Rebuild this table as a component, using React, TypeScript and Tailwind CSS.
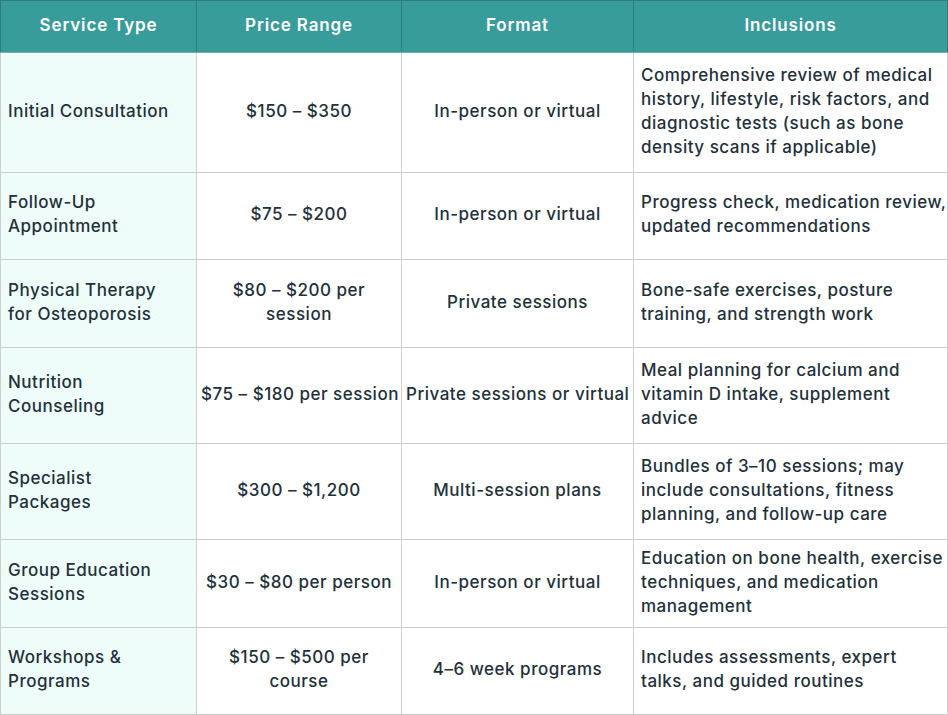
const rows = [
  {
    service: ["Initial Consultation"],
    price: ["$150 – $350"],
    format: "In-person or virtual",
    inclusions: [
      "Comprehensive review of medical",
      "history, lifestyle, risk factors, and",
      "diagnostic tests (such as bone",
      "density scans if applicable)",
    ],
    h: "h-[120px]",
  },
  {
    service: ["Follow-Up", "Appointment"],
    price: ["$75 – $200"],
    format: "In-person or virtual",
    inclusions: ["Progress check, medication review,", "updated recommendations"],
    h: "h-[87px]",
  },
  {
    service: ["Physical Therapy", "for Osteoporosis"],
    price: ["$80 – $200 per", "session"],
    format: "Private sessions",
    inclusions: ["Bone-safe exercises, posture", "training, and strength work"],
    h: "h-[88px]",
  },
  {
    service: ["Nutrition", "Counseling"],
    price: ["$75 – $180 per session"],
    format: "Private sessions or virtual",
    inclusions: ["Meal planning for calcium and", "vitamin D intake, supplement", "advice"],
    h: "h-[96px]",
  },
  {
    service: ["Specialist", "Packages"],
    price: ["$300 – $1,200"],
    format: "Multi-session plans",
    inclusions: [
      "Bundles of 3–10 sessions; may",
      "include consultations, fitness",
      "planning, and follow-up care",
    ],
    h: "h-[96px]",
  },
  {
    service: ["Group Education", "Sessions"],
    price: ["$30 – $80 per person"],
    format: "In-person or virtual",
    inclusions: ["Education on bone health, exercise", "techniques, and medication", "management"],
    h: "h-[88px]",
  },
  {
    service: ["Workshops &", "Programs"],
    price: ["$150 – $500 per", "course"],
    format: "4–6 week programs",
    inclusions: ["Includes assessments, expert", "talks, and guided routines"],
    h: "h-[87px]",
  },
];

function Lines({ lines }: { lines: string[] }) {
  return (
    <>
      {lines.map((l, i) => (
        <span key={i} className="block whitespace-nowrap">
          {l}
        </span>
      ))}
    </>
  );
}

export default function App() {
  return (
    <div className="bg-white min-h-screen" style={{ fontFamily: "Inter, 'Noto Sans', sans-serif" }}>
      <table className="table-fixed border-collapse w-[947px] text-[17px] leading-6 font-medium tracking-[0.03em] text-[#22303a]">
        <colgroup>
          <col className="w-[196px]" />
          <col className="w-[205px]" />
          <col className="w-[232px]" />
          <col className="w-[314px]" />
        </colgroup>
        <thead>
          <tr className="h-[52px] bg-[#379c9a] text-white">
            {["Service Type", "Price Range", "Format", "Inclusions"].map((t) => (
              <th
                key={t}
                className="border border-[#2d7f7d] border-b-[#7aa8a6] px-2 pb-1 text-center text-[17px] font-semibold tracking-[0.05em]"
              >
                {t}
              </th>
            ))}
          </tr>
        </thead>
        <tbody>
          {rows.map((r) => (
            <tr key={r.service.join(" ")} className={r.h}>
              <td className="border border-[#cdcdcd] bg-[#effdfa] px-[7px] pb-1 align-middle">
                <Lines lines={r.service} />
              </td>
              <td className="border border-[#cdcdcd] px-[4px] pb-1 text-center align-middle">
                <Lines lines={r.price} />
              </td>
              <td className="border border-[#cdcdcd] px-[4px] pb-1 text-center align-middle whitespace-nowrap">
                {r.format}
              </td>
              <td className="border border-[#cdcdcd] px-[7px] pb-1 align-middle">
                <Lines lines={r.inclusions} />
              </td>
            </tr>
          ))}
        </tbody>
      </table>
    </div>
  );
}
